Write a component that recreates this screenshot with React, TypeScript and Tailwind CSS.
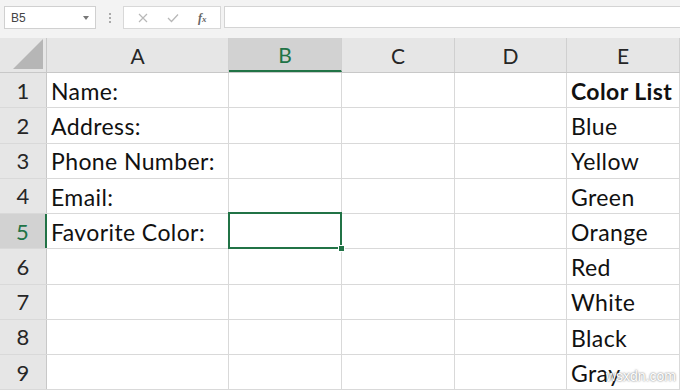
import React from "react";

const cols = [
  { key: "A", w: "w-[182px]" },
  { key: "B", w: "w-[113px]" },
  { key: "C", w: "w-[113px]" },
  { key: "D", w: "w-[112px]" },
  { key: "E", w: "flex-1" },
];

const colA = ["Name:", "Address:", "Phone Number:", "Email:", "Favorite Color:", "", "", "", ""];
const colE = ["Color List", "Blue", "Yellow", "Green", "Orange", "Red", "White", "Black", "Gray"];

const font = { fontFamily: "Lato, 'Open Sans', 'Liberation Sans', sans-serif" };

function Toolbar() {
  return (
    <div className="h-[38px] bg-[#f3f3f3] flex items-start pt-[6px] relative">
      <div className="ml-[4px] w-[92px] h-[23px] bg-white border border-[#d0d0d0] flex items-center justify-between px-[6px]">
        <span className="text-[12px] text-[#444]" style={{ fontFamily: "'Liberation Sans', sans-serif" }}>B5</span>
        <span className="w-0 h-0 border-l-[3px] border-r-[3px] border-t-[4px] border-l-transparent border-r-transparent border-t-[#777]" />
      </div>
      <div className="w-[27px] h-[23px] flex flex-col items-center justify-center gap-[2px]">
        <span className="w-[2px] h-[2px] bg-[#aaa]" />
        <span className="w-[2px] h-[2px] bg-[#aaa]" />
        <span className="w-[2px] h-[2px] bg-[#aaa]" />
      </div>
      <div className="w-[98px] h-[23px] bg-white border border-[#d8d8d8] flex items-center justify-around px-[4px]">
        <svg width="10" height="10" viewBox="0 0 10 10">
          <path d="M1 1 L9 9 M9 1 L1 9" stroke="#b8b8b8" strokeWidth="1.2" />
        </svg>
        <svg width="12" height="10" viewBox="0 0 12 10">
          <path d="M1 5 L4.5 8.5 L11 1.5" stroke="#b8b8b8" strokeWidth="1.3" fill="none" />
        </svg>
        <span className="text-[12px] italic font-bold text-[#666]" style={{ fontFamily: "'Liberation Serif', serif" }}>
          f<span className="text-[9px]">x</span>
        </span>
      </div>
      <div className="ml-[3px] flex-1 h-[22px] bg-white border-t border-b border-l border-[#d4d4d4]" />
    </div>
  );
}

function HeaderRow() {
  return (
    <div className="flex h-[35px] bg-[#e6e6e6] border-b border-[#c8c8c8]" style={font}>
      <div className="w-[47px] shrink-0 relative border-r border-[#c8c8c8]">
        <svg className="absolute right-[3px] bottom-[3px]" width="30" height="30" viewBox="0 0 30 30">
          <path d="M30 0 L30 30 L0 30 Z" fill="#b6b6b6" />
        </svg>
      </div>
      {cols.map((c) => {
        const sel = c.key === "B";
        return (
          <div
            key={c.key}
            className={
              (c.w === "flex-1" ? "flex-1 " : c.w + " shrink-0 ") +
              (sel
                ? "bg-[#d2d2d2] text-[#217346] border-b-2 border-b-[#217346] "
                : "text-[#262626] ") +
              "border-r border-[#d0d0d0] flex items-center justify-center text-[21px] pt-[2px]"
            }
          >
            {c.key}
          </div>
        );
      })}
    </div>
  );
}

function Row({ n }: { n: number }) {
  const sel = n === 5;
  return (
    <div className="flex h-[35.25px] border-b border-[#d9d9d9] relative" style={font}>
      <div
        className={
          "w-[47px] shrink-0 flex items-center justify-center text-[22px] " +
          (sel
            ? "bg-[#d2d2d2] text-[#217346] border-r-2 border-r-[#217346]"
            : "bg-[#e6e6e6] text-[#262626] border-r border-[#c8c8c8]")
        }
      >
        {n}
      </div>
      {cols.map((c) => {
        let text = "";
        if (c.key === "A") text = colA[n - 1];
        if (c.key === "E") text = colE[n - 1];
        const isSel = sel && c.key === "B";
        return (
          <div
            key={c.key}
            className={
              (c.w === "flex-1" ? "flex-1 " : c.w + " shrink-0 ") +
              "bg-white border-r border-[#d9d9d9] flex items-center pl-[4px] pt-[2px] text-[23px] tracking-[0.4px] text-[#111] whitespace-nowrap overflow-visible relative " +
              (c.key === "E" && n === 1 ? "font-bold" : "")
            }
          >
            {text}
            {isSel && (
              <div className="absolute z-10 -left-[1px] -top-[2px] -right-[1px] -bottom-[1px] border-2 border-[#217346]">
                <div className="absolute -right-[5px] -bottom-[5px] w-[7px] h-[7px] bg-[#217346] border border-white" />
              </div>
            )}
          </div>
        );
      })}
    </div>
  );
}

export default function App() {
  return (
    <div className="w-[680px] h-[390px] overflow-hidden bg-white relative">
      <Toolbar />
      <HeaderRow />
      {[1, 2, 3, 4, 5, 6, 7, 8, 9].map((n) => (
        <Row key={n} n={n} />
      ))}
      <span
        className="absolute z-20 right-[4px] bottom-[3px] text-[14px] text-white"
        style={{ fontFamily: "'Liberation Sans', sans-serif", textShadow: "0 0 2px #555" }}
      >
        wsxdn.com
      </span>
    </div>
  );
}
